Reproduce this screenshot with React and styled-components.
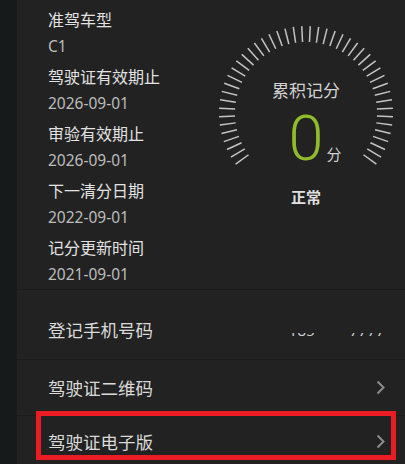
import React from "react";
import styled, { createGlobalStyle } from "styled-components";

const GlobalStyle = createGlobalStyle`
    html, body {
        margin: 0;
        height: 464px;
        overflow: hidden;
        background: #222222;
    }
    body {
        font-family: "Noto Sans", "Noto Sans CJK SC", sans-serif;
    }
`;

const infoList = [
    { label: "准驾车型", value: "C1" },
    { label: "驾驶证有效期止", value: "2026-09-01" },
    { label: "审验有效期止", value: "2026-09-01" },
    { label: "下一清分日期", value: "2022-09-01" },
    { label: "记分更新时间", value: "2021-09-01" },
];

const TICKS = 46;
const START = -126;
const SPAN = 252;

const Chevron = () => (
    <svg width="9" height="15" viewBox="0 0 9 15">
        <polyline
            points="1.5,1.5 7.5,7.5 1.5,13.5"
            fill="none"
            stroke="#8c8c8c"
            strokeWidth="2"
        />
    </svg>
);

const GaugeTicks = () => {
    const cx = 95;
    const cy = 96;
    const lines = [];
    for (let i = 0; i < TICKS; i++) {
        const a = ((START + (SPAN / (TICKS - 1)) * i) * Math.PI) / 180;
        const sin = Math.sin(a);
        const cos = Math.cos(a);
        lines.push(
            <line
                key={i}
                x1={cx + 71 * sin}
                y1={cy - 71 * cos}
                x2={cx + 87 * sin}
                y2={cy - 87 * cos}
                stroke="#c4c4c4"
                strokeWidth="1.5"
            />
        );
    }
    return (
        <TickSvg width="190" height="190" viewBox="0 0 190 190">
            {lines}
        </TickSvg>
    );
};

const App = () => {
    return (
        <Page>
            <GlobalStyle />
            <Strip />
            <Panel>
                <Top>
                    <InfoList>
                        {infoList.map((item) => (
                            <InfoItem key={item.label}>
                                <Label>{item.label}</Label>
                                <Value>{item.value}</Value>
                            </InfoItem>
                        ))}
                    </InfoList>
                    <Gauge>
                        <GaugeTicks />
                        <GaugeText>
                            <GaugeTitle>累积记分</GaugeTitle>
                            <ScoreLine>
                                <span />
                                <Score>0</Score>
                                <Unit>分</Unit>
                            </ScoreLine>
                            <Status>正常</Status>
                        </GaugeText>
                    </Gauge>
                </Top>
                <Rows>
                    <Row height={70} padTop={10}>
                        <RowTitle>登记手机号码</RowTitle>
                        <Phone>185****7777</Phone>
                    </Row>
                    <Row height={56}>
                        <RowTitle>驾驶证二维码</RowTitle>
                        <Chevron />
                    </Row>
                    <Row height={50} last>
                        <RowTitle>驾驶证电子版</RowTitle>
                        <Chevron />
                        <Highlight />
                    </Row>
                </Rows>
            </Panel>
        </Page>
    );
};

export default App;

const Page = styled.div`
    display: flex;
    width: 405px;
    height: 464px;
    overflow: hidden;
`;

const Strip = styled.div`
    width: 17px;
    flex-shrink: 0;
    background: #171a1b;
`;

const Panel = styled.div`
    flex: 1;
    display: flex;
    flex-direction: column;
    background: #222222;
`;

const Top = styled.section`
    display: grid;
    grid-template-columns: 194px 190px;
    height: 289px;
    border-bottom: 1px solid #1b1b1b;
`;

const InfoList = styled.div`
    display: flex;
    flex-direction: column;
    padding: 7px 0 0 31px;
`;

const InfoItem = styled.div`
    display: flex;
    flex-direction: column;
    margin-bottom: 5px;
`;

const Label = styled.div`
    font-size: 16px;
    line-height: 26px;
    color: #e2e2e2;
    white-space: nowrap;
`;

const Value = styled.div`
    font-size: 15.5px;
    line-height: 26px;
    color: #bdbdbd;
`;

const Gauge = styled.div`
    display: grid;
    margin-top: 17px;
    height: 200px;
    & > * {
        grid-area: 1 / 1;
    }
`;

const TickSvg = styled.svg`
    display: block;
`;

const GaugeText = styled.div`
    display: flex;
    flex-direction: column;
    align-items: center;
    padding-top: 62px;
`;

const GaugeTitle = styled.div`
    font-size: 17px;
    line-height: 24px;
    color: #d2d2d2;
`;

const ScoreLine = styled.div`
    display: grid;
    grid-template-columns: 1fr auto 1fr;
    align-items: baseline;
    width: 100%;
    margin-top: 4px;
`;

const Score = styled.span`
    font-family: Roboto, "Noto Sans", sans-serif;
    font-weight: 300;
    font-size: 63px;
    line-height: 63px;
    color: #8fbb2c;
`;

const Unit = styled.span`
    font-size: 15px;
    color: #d0d0d0;
    padding-left: 3px;
`;

const Status = styled.div`
    margin-top: 17px;
    font-size: 15px;
    line-height: 20px;
    font-weight: 700;
    color: #e0e0e0;
`;

const Rows = styled.div`
    display: flex;
    flex-direction: column;
`;

const Row = styled.div`
    position: relative;
    box-sizing: border-box;
    display: flex;
    align-items: center;
    justify-content: space-between;
    height: ${(p) => p.height}px;
    flex-shrink: 0;
    padding: ${(p) => p.padTop || 0}px 20px 0 31px;
    border-bottom: ${(p) => (p.last ? "none" : "1px solid #1b1b1b")};
`;

const RowTitle = styled.span`
    font-size: 17.5px;
    color: #dadada;
`;

const Phone = styled.span`
    display: inline-block;
    font-size: 15px;
    line-height: 18px;
    color: #cfcfcf;
    letter-spacing: 0.3px;
    clip-path: inset(12.5px 0 0 0);
`;

const Highlight = styled.div`
    position: absolute;
    left: 19px;
    top: -5px;
    width: 360px;
    height: 49px;
    box-sizing: border-box;
    border: 5px solid #ec1c24;
    pointer-events: none;
`;
